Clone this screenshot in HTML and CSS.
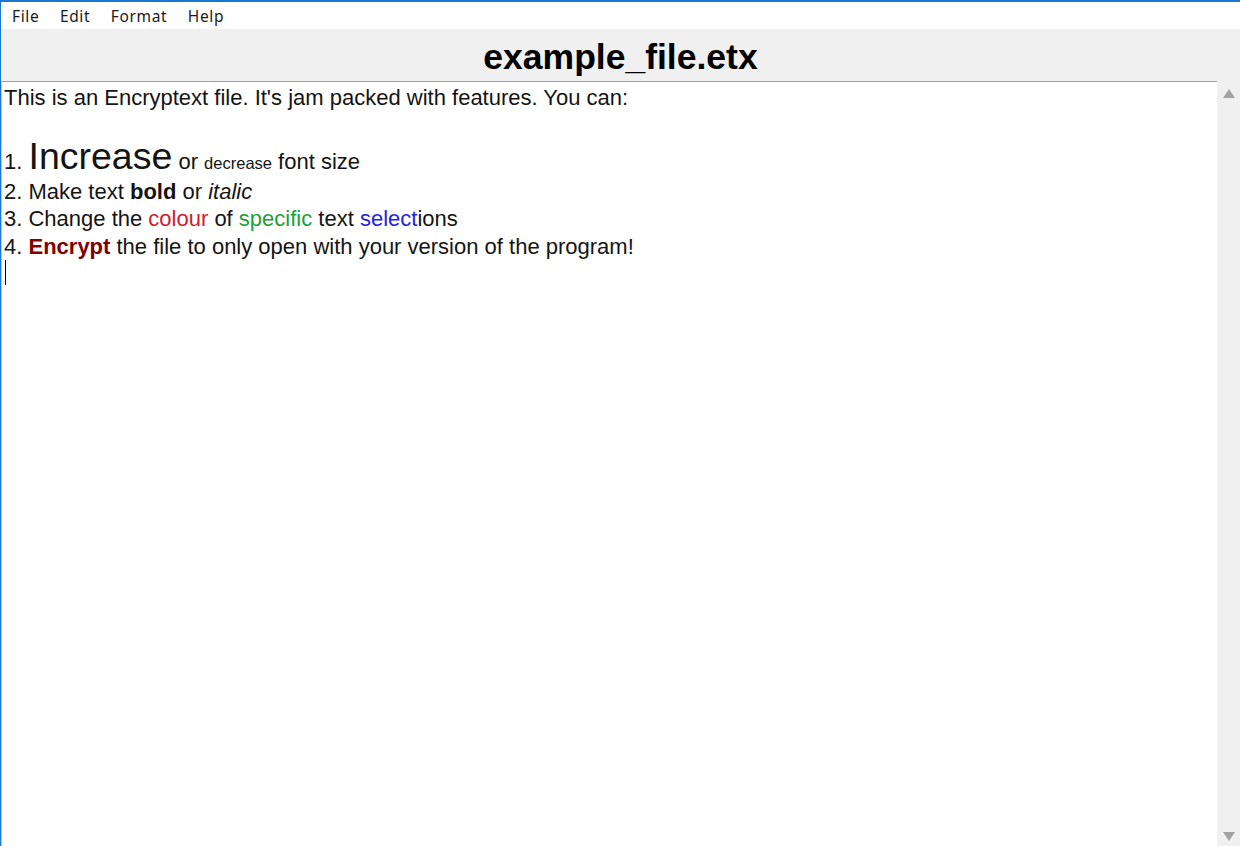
FILE: index.html
```html
<!DOCTYPE html>
<html lang="en">
<head>
<meta charset="utf-8">
<title>example_file.etx - Encryptext</title>
<link rel="stylesheet" href="styles.css">
</head>
<body>
<div class="window">
  <nav class="menubar">
    <span class="menu-item">File</span>
    <span class="menu-item">Edit</span>
    <span class="menu-item">Format</span>
    <span class="menu-item">Help</span>
  </nav>
  <header class="titlebar">
    <h1 class="file-title">example_file.etx</h1>
  </header>
  <main class="main">
    <div class="editor">
      <div class="line">This is an Encryptext file. It's jam packed with features. You can:</div>
      <div class="line">&nbsp;</div>
      <div class="line">1. <span class="big">Increase</span> or <span class="small">decrease</span> font size</div>
      <div class="line">2. Make text <b>bold</b> or <i>italic</i></div>
      <div class="line">3. Change the <span class="red">colour</span> of <span class="green">specific</span> text <span class="blue">select</span>ions</div>
      <div class="line">4. <b class="maroon">Encrypt</b> the file to only open with your version of the program!</div>
      <div class="line"><span class="caret"></span></div>
    </div>
    <div class="scrollbar">
      <span class="arrow arrow-up"></span>
      <span class="arrow arrow-down"></span>
    </div>
  </main>
</div>
</body>
</html>
```
FILE: styles.css
```css
html, body {
  margin: 0;
  padding: 0;
  background: #ffffff;
}

body {
  width: 1240px;
  height: 846px;
  overflow: hidden;
}

.window {
  box-sizing: border-box;
  width: 1240px;
  height: 846px;
  border-top: 2px solid #1a78d4;
  border-left: 1px solid #1a78d4;
  display: flex;
  flex-direction: column;
  background: #f0f0f0;
}

.menubar {
  height: 27px;
  flex: none;
  background: #ffffff;
  display: flex;
  align-items: center;
  padding-left: 1px;
  font-family: "Noto Sans", "Open Sans", sans-serif;
  font-size: 15.5px;
  letter-spacing: 0.65px;
  color: #1a1a1a;
}

.menu-item {
  padding: 0 10.5px 0 10px;
  line-height: 28px;
}

.titlebar {
  height: 52px;
  flex: none;
  background: #f0f0f0;
  display: flex;
  align-items: center;
  justify-content: center;
}

.file-title {
  margin: 0;
  font-family: "Liberation Sans", Arial, sans-serif;
  font-weight: bold;
  font-size: 35.5px;
  line-height: 1;
  color: #000000;
  padding-top: 6px;
}

.main {
  flex: 1;
  display: flex;
  min-height: 0;
}

.editor {
  flex: 1;
  background: #ffffff;
  border-top: 1px solid #a0a0a0;
  border-left: 1px solid #c8c8c8;
  padding: 2px 0 0 2px;
  font-family: "Liberation Sans", Arial, sans-serif;
  font-size: 22px;
  color: #141414;
}

.line {
  line-height: 27.5px;
  white-space: nowrap;
}

.big {
  font-size: 37.5px;
  line-height: 35px;
}

.small {
  font-size: 16.5px;
}

.red { color: #d0202c; }
.green { color: #20a03a; }
.blue { color: #2424e0; }
.maroon { color: #800000; }

.caret {
  display: inline-block;
  width: 1px;
  height: 25px;
  background: #000000;
  vertical-align: -4px;
  margin-left: 1px;
}

.scrollbar {
  width: 22px;
  flex: none;
  margin-left: 1px;
  background: #f0f0f0;
  display: flex;
  flex-direction: column;
  justify-content: space-between;
  align-items: center;
  padding: 8px 0 5px;
}

.arrow {
  width: 0;
  height: 0;
  border-left: 6px solid transparent;
  border-right: 6px solid transparent;
}

.arrow-up {
  border-bottom: 9px solid #a3a3a3;
}

.arrow-down {
  border-top: 9px solid #a3a3a3;
}
```
